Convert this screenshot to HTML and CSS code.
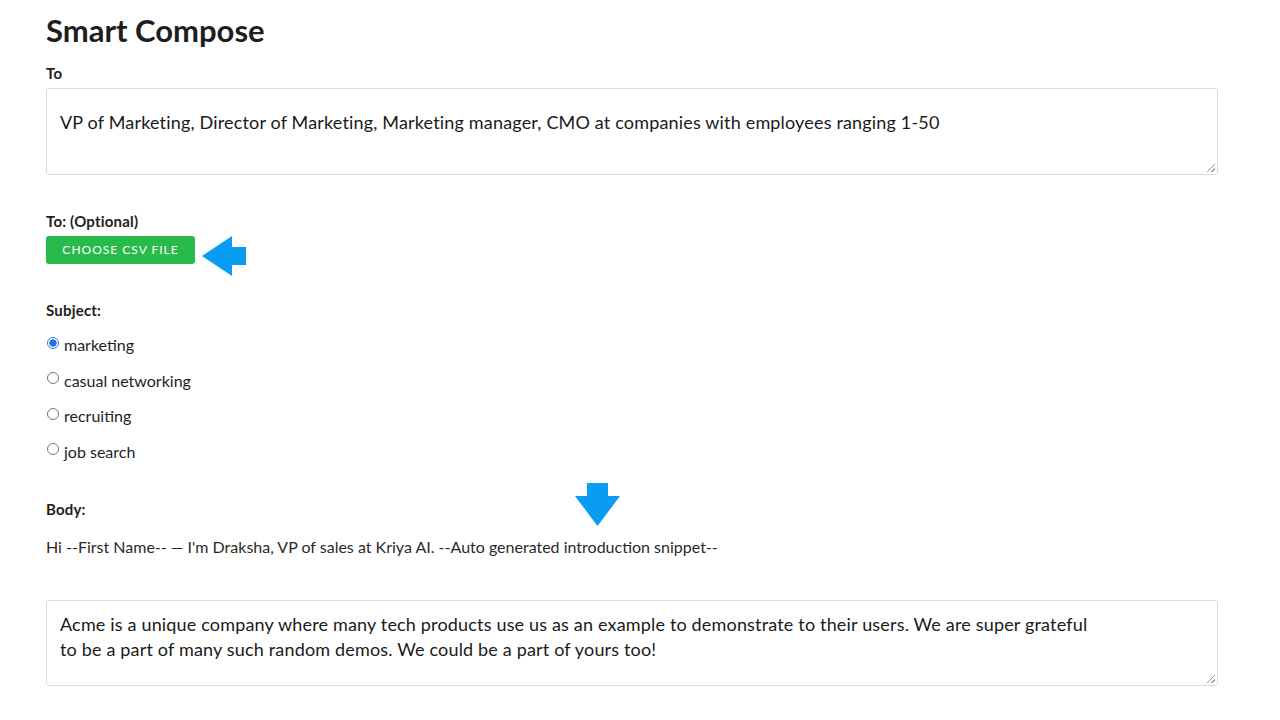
FILE: index.html
```html
<!DOCTYPE html>
<html>
<head>
<meta charset="utf-8">
<link rel="stylesheet" href="styles.css">
</head>
<body>
<main class="page">
  <h1 class="title">Smart Compose</h1>
  <label class="label label-to">To</label>
  <div class="box box-to">VP of Marketing, Director of Marketing, Marketing manager, CMO at companies with employees ranging 1-50<span class="grip"></span></div>

  <label class="label label-opt">To: (Optional)</label>
  <div class="csv-row">
    <button class="btn">CHOOSE CSV FILE</button>
    <svg class="arrow-left" width="46" height="42" viewBox="0 0 46 42"><polygon points="0,20 30,0 30,11 44,11 44,29 30,29 30,40" fill="#0a9cf0"/></svg>
  </div>

  <label class="label label-subj">Subject:</label>
  <div class="radios">
    <div class="radio-row"><span class="radio checked"></span><span>marketing</span></div>
    <div class="radio-row"><span class="radio"></span><span>casual networking</span></div>
    <div class="radio-row"><span class="radio"></span><span>recruiting</span></div>
    <div class="radio-row"><span class="radio"></span><span>job search</span></div>
  </div>

  <div class="body-head">
    <label class="label label-body">Body:</label>
    <svg class="arrow-down" width="46" height="44" viewBox="0 0 46 44"><polygon points="12,0 33,0 33,13 45,13 22.5,43 0,13 12,13" fill="#0a9cf0"/></svg>
  </div>
  <p class="intro">Hi --First Name-- — I'm Draksha, VP of sales at Kriya AI. --Auto generated introduction snippet--</p>

  <div class="box box-body">Acme is a unique company where many tech products use us as an example to demonstrate to their users. We are super grateful<br>to be a part of many such random demos. We could be a part of yours too!<span class="grip"></span></div>
</main>
</body>
</html>
```
FILE: styles.css
```css
html, body {
  margin: 0;
  padding: 0;
  background: #ffffff;
}
body {
  font-family: Lato, "Noto Sans", sans-serif;
  color: #1c1c1c;
}
.page {
  padding: 0 62px 0 46px;
  display: flex;
  flex-direction: column;
}
.title {
  margin: 12px 0 0 0;
  font-size: 31px;
  font-weight: 700;
  line-height: 36px;
  color: #1e1e1e;
}
.label {
  display: block;
  font-size: 15px;
  font-weight: 700;
  letter-spacing: 0.2px;
  line-height: 18px;
  color: #1e1e1e;
}
.label-to { margin-top: 16px; }
.box {
  position: relative;
  border: 1px solid #dcdcdc;
  border-radius: 3px;
  font-size: 18px;
  letter-spacing: 0.17px;
  line-height: 25px;
  color: #1a1a1a;
  box-sizing: border-box;
}
.box-to {
  margin-top: 6px;
  height: 87px;
  padding: 21px 13px;
}
.grip {
  position: absolute;
  right: 2px;
  bottom: 2px;
  width: 8px;
  height: 8px;
  background: linear-gradient(135deg, transparent 45%, #999 45%, #999 55%, transparent 55%, transparent 75%, #999 75%, #999 85%, transparent 85%);
}
.label-opt { margin-top: 37px; }
.csv-row {
  display: flex;
  align-items: flex-start;
  margin-top: 6px;
}
.btn {
  width: 149px;
  height: 28px;
  background: #28bb4b;
  color: #ffffff;
  border: none;
  border-radius: 3px;
  font-family: Lato, "Noto Sans", sans-serif;
  font-size: 12px;
  letter-spacing: 1px;
  padding: 0 0 2px 0;
}
.arrow-left {
  margin-left: 7px;
}
.label-subj { margin-top: 23px; }
.radios {
  display: flex;
  flex-direction: column;
  margin-top: 8px;
}
.radio-row {
  display: flex;
  align-items: center;
  height: 35.5px;
  font-size: 16px;
  color: #1e1e1e;
}
.radio {
  width: 12px;
  height: 12px;
  border: 1px solid #777;
  border-radius: 50%;
  margin: 0 5px 4px 1px;
  box-sizing: border-box;
  flex-shrink: 0;
}
.radio.checked {
  border: 1px solid #2a7ce6;
  background: radial-gradient(circle, #1a73e8 0 3.4px, #ffffff 3.9px);
}
.body-head {
  display: flex;
  align-items: flex-start;
  margin-top: 14px;
  height: 44px;
}
.label-body {
  margin-top: 17px;
}
.arrow-down {
  margin-left: 489px;
}
.intro {
  margin: 10px 0 0 0;
  font-size: 16px;
  line-height: 20px;
  color: #2a2a2a;
}
.box-body {
  margin-top: 43px;
  height: 86px;
  padding: 11px 13px;
}
```
